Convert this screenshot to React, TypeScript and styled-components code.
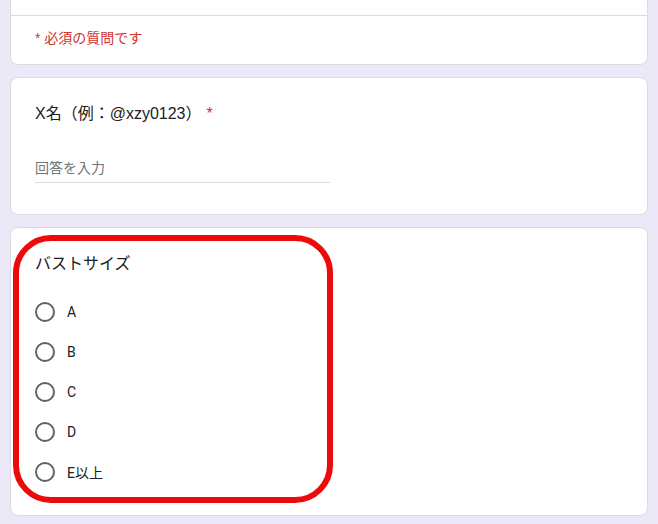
import React from 'react';
import styled, { createGlobalStyle } from 'styled-components';

const GlobalStyle = createGlobalStyle`
    html, body {
        margin : 0;
        padding : 0;
        background : #ede8f7;
        font-family : "Liberation Sans", "Noto Sans CJK JP", sans-serif;
        color : #202124;
    }
    * { box-sizing : border-box; }
`;

const Page = styled.div`
    width : 658px;
    height : 524px;
    overflow : hidden;
    padding : 0 10px;
    display : flex;
    flex-direction : column;
    gap : 12px;
`;

const Card = styled.div<{ $cut?: boolean }>`
    position : relative;
    width : 638px;
    background : #ffffff;
    border : 1px solid #dadce0;
    border-top : ${p => (p.$cut ? 'none' : '1px solid #dadce0')};
    border-radius : ${p => (p.$cut ? '0 0 8px 8px' : '8px')};
`;

const CardHead = styled.div`
    height : 16px;
    border-bottom : 1px solid #dadce0;
`;

const Required = styled.div`
    padding : 12px 24px 16px;
    font-size : 14px;
    line-height : 20px;
    color : #d0342c;
`;

const Body = styled.div<{ $bottom: number }>`
    padding : 24px 24px ${p => p.$bottom}px;
`;

const Title = styled.div`
    font-size : 16px;
    line-height : 24px;
    color : #202124;
`;

const Star = styled.span`
    color : #d0342c;
    margin-left : 5px;
`;

const Input = styled.div`
    margin-top : 32px;
    width : 295px;
    padding-bottom : 4px;
    border-bottom : 1px solid #dadce0;
    font-size : 14px;
    line-height : 20px;
    color : #70757a;
`;

const Options = styled.div`
    margin-top : 16px;
    display : flex;
    flex-direction : column;
`;

const Option = styled.div`
    height : 40px;
    display : flex;
    align-items : center;
    gap : 12px;
    font-family : Roboto, "Noto Sans CJK JP", sans-serif;
    font-size : 14px;
    color : #202124;
`;

const Radio = styled.span`
    width : 20px;
    height : 20px;
    border-radius : 50%;
    border : 2px solid #5f6368;
`;

// 赤い囲み（注釈）
const Highlight = styled.div`
    position : absolute;
    left : 2px;
    top : 7px;
    width : 320px;
    height : 268px;
    border : 6px solid #ec0a0a;
    border-radius : 38px;
    pointer-events : none;
`;

const sizes = ['A', 'B', 'C', 'D', 'E以上'];

const App = () => {
    return (
        <>
            <GlobalStyle />
            <Page>
                <Card $cut>
                    <CardHead />
                    <Required>* 必須の質問です</Required>
                </Card>

                <Card>
                    <Body $bottom={31}>
                        <Title>
                            X名（例：@xzy0123）<Star>*</Star>
                        </Title>
                        <Input>回答を入力</Input>
                    </Body>
                </Card>

                <Card>
                    <Body $bottom={23}>
                        <Title>バストサイズ</Title>
                        <Options>
                            {sizes.map(s => (
                                <Option key={s}>
                                    <Radio />
                                    {s}
                                </Option>
                            ))}
                        </Options>
                    </Body>
                    <Highlight />
                </Card>
            </Page>
        </>
    );
};

export default App;
